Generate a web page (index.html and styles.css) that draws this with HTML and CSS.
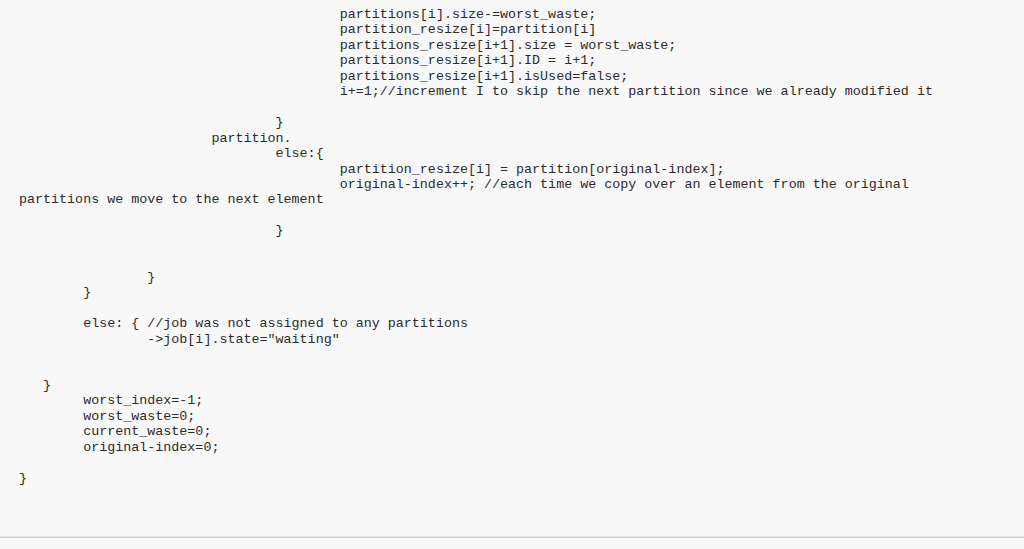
FILE: index.html
```html
<!DOCTYPE html>
<html lang="en">
<head>
<meta charset="utf-8">
<title>Code</title>
<link rel="stylesheet" href="styles.css">
</head>
<body>
<div class="page">
<main class="content">
<pre class="code">                                        partitions[i].size-=worst_waste;
                                        partition_resize[i]=partition[i]
                                        partitions_resize[i+1].size = worst_waste;
                                        partitions_resize[i+1].ID = i+1;
                                        partitions_resize[i+1].isUsed=false;
                                        i+=1;//increment I to skip the next partition since we already modified it

                                }
                        partition.
                                else:{
                                        partition_resize[i] = partition[original-index];
                                        original-index++; //each time we copy over an element from the original
partitions we move to the next element

                                }


                }
        }

        else: { //job was not assigned to any partitions
                -&gt;job[i].state="waiting"


   }
        worst_index=-1;
        worst_waste=0;
        current_waste=0;
        original-index=0;

}</pre>
</main>
<footer class="rule"></footer>
</div>
</body>
</html>
```

FILE: styles.css
```css
html, body {
  margin: 0;
  padding: 0;
  background: #f8f8f8;
}

.page {
  display: flex;
  flex-direction: column;
  height: 549px;
}

.content {
  flex: 1;
  padding: 7px 0 0 19px;
}

.code {
  margin: 0;
  font-family: "Liberation Mono", "Courier New", monospace;
  font-size: 13.36px;
  line-height: 15.45px;
  color: #2b2b2b;
  white-space: pre;
}

.rule {
  height: 11px;
  border-top: 1px solid #cfcfcf;
  box-shadow: 0 -1px 0 #e6e6e6;
}
```
